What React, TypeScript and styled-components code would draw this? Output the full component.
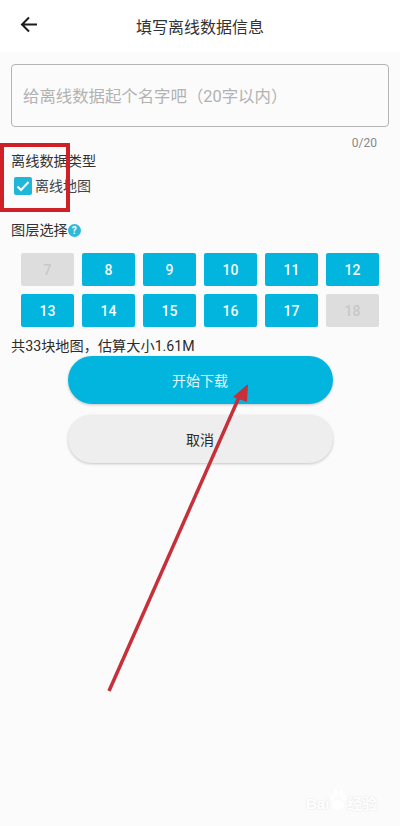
import React from 'react';
import styled, { createGlobalStyle } from 'styled-components';

const Global = createGlobalStyle`
  html, body { margin: 0; padding: 0; background: #fbfbfb; }
  * { box-sizing: border-box; }
`;
const Page = styled.div`
  position: relative;
  width: 400px;
  height: 826px;
  overflow: hidden;
  background: #fbfbfb;
  color: #2a2a2a;
  font-family: Roboto, "Noto Sans CJK SC", sans-serif;
`;
const Header = styled.header`
  height: 52px;
  background: #fff;
  display: flex;
  align-items: center;
  justify-content: center;
  position: relative;
  font-size: 16px;
  color: #333;
`;
const Back = styled.svg`
  position: absolute;
  left: 19px;
  top: 14px;
  width: 20px;
  height: 20px;
`;
const Body = styled.main`
  padding: 12px 11px 0;
`;
const NameInput = styled.div`
  height: 63px;
  border: 1px solid #b4b4b4;
  border-radius: 4px;
  display: flex;
  align-items: center;
  padding: 0 0 2px 11px;
  font-size: 16.4px;
  color: #b2b2b2;
`;
const Counter = styled.div`
  text-align: right;
  font-size: 12px;
  line-height: 14px;
  color: #888;
  margin-top: 9px;
  padding-right: 12px;
`;
const Label = styled.div`
  font-size: 14.2px;
  line-height: 20px;
  color: #333;
`;
const TypeLabel = styled(Label)`
  margin-top: 1px;
`;
const CheckRow = styled.div`
  display: flex;
  align-items: center;
  gap: 3px;
  margin-top: 5px;
  padding-left: 3px;
  font-size: 14px;
  line-height: 20px;
  color: #444;
`;
const Box = styled.span`
  width: 18px;
  height: 18px;
  border-radius: 2px;
  background: #1fb6da;
  display: flex;
  align-items: center;
  justify-content: center;
`;
const LayerLabel = styled(Label)`
  display: flex;
  align-items: center;
  margin-top: 24px;
`;
const Help = styled.span`
  width: 13px;
  height: 13px;
  border-radius: 50%;
  background: #2db8dc;
  color: #fff;
  font-size: 10px;
  font-weight: 700;
  line-height: 13px;
  text-align: center;
`;
const Grid = styled.div`
  display: grid;
  grid-template-columns: repeat(6, 53px);
  justify-content: space-between;
  row-gap: 8px;
  margin: 13px 10px 0;
`;
const Cell = styled.div<{ $off: boolean }>`
  height: 33px;
  border-radius: 2px;
  background: ${p => (p.$off ? '#dddddd' : '#02b5df')};
  color: ${p => (p.$off ? '#c8c8c8' : '#f2fbfd')};
  display: flex;
  align-items: center;
  justify-content: center;
  font-size: 14px;
  font-weight: 500;
`;
const Summary = styled.div`
  margin-top: 10px;
  font-size: 14.2px;
  line-height: 19px;
  color: #2c2c2c;
  white-space: nowrap;
`;
const Actions = styled.div`
  display: flex;
  flex-direction: column;
  align-items: center;
  gap: 11px;
`;
const Btn = styled.div<{ $primary?: boolean }>`
  width: 265px;
  height: 48px;
  border-radius: 24px;
  display: flex;
  align-items: center;
  justify-content: center;
  font-size: 14px;
  background: ${p => (p.$primary ? '#02b5df' : '#eeeeee')};
  color: ${p => (p.$primary ? '#e4f6fb' : '#2a2a2a')};
  box-shadow: 0 1px 3px rgba(0, 0, 0, 0.22);
`;
const RedBox = styled.div`
  position: absolute;
  left: 0;
  top: 143px;
  width: 70px;
  height: 69px;
  border: 4px solid #cf2027;
`;
const Arrow = styled.svg`
  position: absolute;
  left: 0;
  top: 0;
  pointer-events: none;
`;
const Watermark = styled.div`
  position: absolute;
  left: 306px;
  top: 789px;
  display: flex;
  align-items: flex-end;
  font-size: 15px;
  line-height: 18px;
  font-weight: 700;
  font-family: "Liberation Sans", "Noto Sans CJK SC", sans-serif;
  color: #fff;
  text-shadow: 0 0 2px rgba(0, 0, 0, 0.12);
  white-space: nowrap;
`;
const Paw = styled.svg`
  margin: 0 1px 2px;
`;

const layers: [number, boolean][] = [
  [7, true], [8, false], [9, false], [10, false], [11, false], [12, false],
  [13, false], [14, false], [15, false], [16, false], [17, false], [18, true],
];

export default function App() {
  return (
    <Page>
      <Global />
      <Header>
        <Back viewBox="0 0 20 20" fill="none" stroke="#1c1c1c" strokeWidth="2">
          <path d="M18 10.5H3M10 3.5l-7 7 7 7" />
        </Back>
        填写离线数据信息
      </Header>
      <Body>
        <NameInput>给离线数据起个名字吧（20字以内）</NameInput>
        <Counter>0/20</Counter>
        <TypeLabel>离线数据类型</TypeLabel>
        <CheckRow>
          <Box>
            <svg width="14" height="14" viewBox="0 0 14 14" fill="none" stroke="#fff" strokeWidth="2">
              <path d="M1.5 7.5l3.5 3.5 7.5-8" />
            </svg>
          </Box>
          离线地图
        </CheckRow>
        <LayerLabel>图层选择<Help>?</Help></LayerLabel>
        <Grid>
          {layers.map(([n, off]) => (
            <Cell key={n} $off={off}>{n}</Cell>
          ))}
        </Grid>
        <Summary>共33块地图，估算大小1.61M</Summary>
        <Actions>
          <Btn $primary>开始下载</Btn>
          <Btn>取消</Btn>
        </Actions>
      </Body>
      <RedBox />
      <Arrow width="400" height="826" viewBox="0 0 400 826">
        <path d="M109 691L240 395" stroke="#c5303a" strokeWidth="3.5" fill="none" />
        <path d="M248 384L233 397L247 402Z" fill="#c5303a" />
      </Arrow>
      <Watermark>
        Bai
        <Paw width="16" height="22" viewBox="0 0 16 22" fill="#fff">
          <ellipse cx="8" cy="16" rx="6" ry="5" />
          <ellipse cx="2.5" cy="9" rx="2" ry="3" />
          <ellipse cx="6" cy="4" rx="2" ry="3" />
          <ellipse cx="11" cy="4" rx="2" ry="3" />
          <ellipse cx="14" cy="9" rx="2" ry="3" />
        </Paw>
        经验
      </Watermark>
    </Page>
  );
}
